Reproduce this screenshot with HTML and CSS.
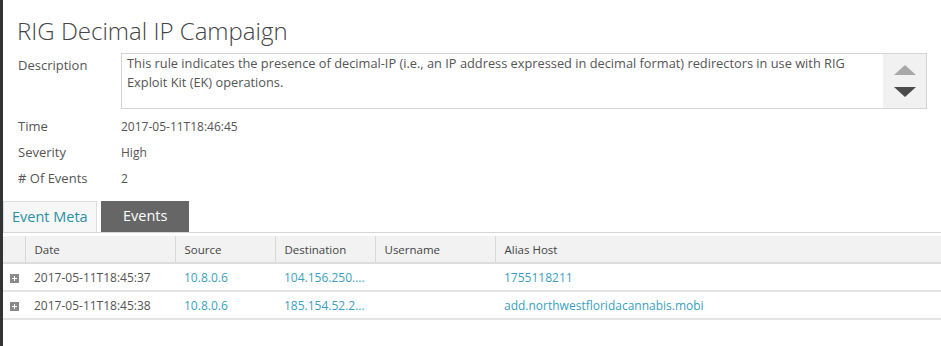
FILE: index.html
```html
<!DOCTYPE html>
<html lang="en">
<head>
    <meta charset="UTF-8">
    <title>RIG Decimal IP Campaign</title>
    <link rel="stylesheet" href="styles.css">
</head>
<body>
    <div class="panel">
        <div class="details">
            <h1>RIG Decimal IP Campaign</h1>

            <div class="row desc-row">
                <span class="label">Description</span>
                <div class="desc-box">
                    <p>This rule indicates the presence of decimal-IP (i.e., an IP address expressed in decimal format) redirectors in use with RIG Exploit Kit (EK) operations.</p>
                    <div class="scroller">
                        <span class="arrow up"></span>
                        <span class="arrow down"></span>
                    </div>
                </div>
            </div>

            <div class="row">
                <span class="label">Time</span>
                <span class="value">2017-05-11T18:46:45</span>
            </div>
            <div class="row">
                <span class="label">Severity</span>
                <span class="value">High</span>
            </div>
            <div class="row">
                <span class="label"># Of Events</span>
                <span class="value">2</span>
            </div>
        </div>

        <!-- tabs -->
        <div class="tabs">
            <div class="tab active">Event Meta</div>
            <div class="tab">Events</div>
        </div>

        <table class="events">
            <thead>
                <tr>
                    <th class="exp"></th>
                    <th class="c-date">Date</th>
                    <th class="c-src">Source</th>
                    <th class="c-dst">Destination</th>
                    <th class="c-user">Username</th>
                    <th>Alias Host</th>
                </tr>
            </thead>
            <tbody>
                <tr>
                    <td class="exp"><span class="plus"></span></td>
                    <td>2017-05-11T18:45:37</td>
                    <td><a href="#">10.8.0.6</a></td>
                    <td><a href="#">104.156.250....</a></td>
                    <td></td>
                    <td><a href="#">1755118211</a></td>
                </tr>
                <tr>
                    <td class="exp"><span class="plus"></span></td>
                    <td>2017-05-11T18:45:38</td>
                    <td><a href="#">10.8.0.6</a></td>
                    <td><a href="#">185.154.52.2...</a></td>
                    <td></td>
                    <td><a href="#">add.northwestfloridacannabis.mobi</a></td>
                </tr>
            </tbody>
        </table>
    </div>
</body>
</html>
```

FILE: styles.css
```css
body {
    margin: 0;
    font-family: "Open Sans", Arial, sans-serif;
    font-size: 12px;
    color: #555;
    background-color: #fff;
    overflow: hidden;
}

.panel {
    border-left: 3px solid #333;
    min-height: 346px;
    box-sizing: border-box;
}

.details {
    padding: 14px 14px 0 15px;
}

h1 {
    margin: 0 0 5px -1px;
    font-size: 24px;
    font-weight: 300;
    color: #444;
    line-height: 34px;
}

.row {
    display: flex;
    height: 26px;
    align-items: center;
}

.label {
    width: 103px;
    flex-shrink: 0;
    font-size: 13px;
    color: #555;
}

.value {
    color: #555;
}

.desc-row {
    height: auto;
    align-items: flex-start;
    margin-bottom: 4px;
}

.desc-row .label {
    padding-top: 3px;
}

.desc-box {
    flex: 1;
    display: flex;
    height: 56px;
    border: 1px solid #d4d4d4;
    box-sizing: border-box;
}

.desc-box p {
    flex: 1;
    margin: 0;
    padding: 0 5px;
    font-size: 12.8px;
    line-height: 19px;
    color: #555;
}

.scroller {
    width: 43px;
    background-color: #f1f1f1;
    display: flex;
    flex-direction: column;
    align-items: center;
    justify-content: center;
    gap: 12px;
}

.arrow {
    width: 0;
    height: 0;
    border-left: 11px solid transparent;
    border-right: 11px solid transparent;
}

.arrow.up {
    border-bottom: 10px solid #a8a8a8;
}

.arrow.down {
    border-top: 10px solid #4a4a4a;
}

.tabs {
    display: flex;
    gap: 4px;
    margin-top: 10px;
    border-bottom: 1px solid #d6d6d6;
}

.tab {
    height: 31px;
    line-height: 30px;
    font-size: 14.5px;
    padding: 0 22px;
    box-sizing: border-box;
    background-color: #666;
    color: #fff;
}

.tab.active {
    background-color: #f7f7f7;
    color: #2a8fa6;
    border: 1px solid #ddd;
    border-bottom: none;
    padding: 0 8px;
    width: 94px;
}

.events {
    border-collapse: collapse;
    margin-top: 3px;
    width: 1200px;
    table-layout: fixed;
}

.events th,
.events td {
    box-sizing: border-box;
}

.events th {
    background-color: #f2f2f2;
    height: 27px;
    font-weight: normal;
    font-size: 11.5px;
    color: #444;
    text-align: left;
    padding: 0 9px;
    border-left: 1px solid #d8d8d8;
    border-bottom: 2px solid #ddd;
}

.events th:first-child {
    border-left: none;
}

.events td {
    height: 28px;
    padding: 0 9px;
    border-bottom: 2px solid #e4e4e4;
    color: #555;
    white-space: nowrap;
}

.events .exp {
    width: 22px;
    padding: 0;
}

.events td.exp {
    text-align: center;
}

.c-date { width: 150px; }
.c-src { width: 100px; }
.c-dst { width: 100px; }
.c-user { width: 120px; }

.events a {
    color: #3a9fc0;
    text-decoration: none;
}

.plus {
    display: inline-block;
    width: 9px;
    height: 9px;
    background-color: #8a8a8a;
    position: relative;
    vertical-align: middle;
}

.plus::before,
.plus::after {
    content: "";
    position: absolute;
    background-color: #fff;
}

.plus::before {
    left: 2px;
    top: 4px;
    width: 5px;
    height: 1px;
}

.plus::after {
    left: 4px;
    top: 2px;
    width: 1px;
    height: 5px;
}
```
